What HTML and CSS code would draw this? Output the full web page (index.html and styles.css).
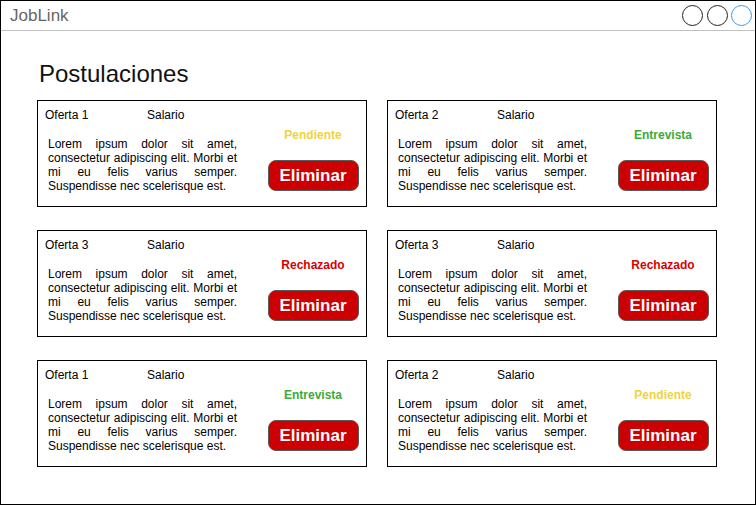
FILE: index.html
```html
<!DOCTYPE html>
<html lang="es">
<head>
<meta charset="utf-8">
<title>JobLink</title>
<link rel="stylesheet" href="styles.css">
</head>
<body>
<div class="window">
  <header class="titlebar">
    <span class="app-title">JobLink</span>
    <div class="controls">
      <span class="dot"></span>
      <span class="dot"></span>
      <span class="dot dot-blue"></span>
    </div>
  </header>
  <main class="content">
    <h1 class="heading">Postulaciones</h1>
    <div class="grid">
      <div class="card">
        <div class="info">
          <div class="meta"><span class="offer">Oferta 1</span><span>Salario</span></div>
          <p class="desc">Lorem ipsum dolor sit amet, consectetur adipiscing elit. Morbi et mi eu felis varius semper. Suspendisse nec scelerisque est.</p>
        </div>
        <div class="side">
          <span class="status pending">Pendiente</span>
          <button class="btn">Eliminar</button>
        </div>
      </div>
      <div class="card">
        <div class="info">
          <div class="meta"><span class="offer">Oferta 2</span><span>Salario</span></div>
          <p class="desc">Lorem ipsum dolor sit amet, consectetur adipiscing elit. Morbi et mi eu felis varius semper. Suspendisse nec scelerisque est.</p>
        </div>
        <div class="side">
          <span class="status interview">Entrevista</span>
          <button class="btn">Eliminar</button>
        </div>
      </div>
      <div class="card">
        <div class="info">
          <div class="meta"><span class="offer">Oferta 3</span><span>Salario</span></div>
          <p class="desc">Lorem ipsum dolor sit amet, consectetur adipiscing elit. Morbi et mi eu felis varius semper. Suspendisse nec scelerisque est.</p>
        </div>
        <div class="side">
          <span class="status rejected">Rechazado</span>
          <button class="btn">Eliminar</button>
        </div>
      </div>
      <div class="card">
        <div class="info">
          <div class="meta"><span class="offer">Oferta 3</span><span>Salario</span></div>
          <p class="desc">Lorem ipsum dolor sit amet, consectetur adipiscing elit. Morbi et mi eu felis varius semper. Suspendisse nec scelerisque est.</p>
        </div>
        <div class="side">
          <span class="status rejected">Rechazado</span>
          <button class="btn">Eliminar</button>
        </div>
      </div>
      <div class="card">
        <div class="info">
          <div class="meta"><span class="offer">Oferta 1</span><span>Salario</span></div>
          <p class="desc">Lorem ipsum dolor sit amet, consectetur adipiscing elit. Morbi et mi eu felis varius semper. Suspendisse nec scelerisque est.</p>
        </div>
        <div class="side">
          <span class="status interview">Entrevista</span>
          <button class="btn">Eliminar</button>
        </div>
      </div>
      <div class="card">
        <div class="info">
          <div class="meta"><span class="offer">Oferta 2</span><span>Salario</span></div>
          <p class="desc">Lorem ipsum dolor sit amet, consectetur adipiscing elit. Morbi et mi eu felis varius semper. Suspendisse nec scelerisque est.</p>
        </div>
        <div class="side">
          <span class="status pending">Pendiente</span>
          <button class="btn">Eliminar</button>
        </div>
      </div>
    </div>
  </main>
</div>
</body>
</html>
```

FILE: styles.css
```css
* { box-sizing: border-box; }

html, body {
  margin: 0;
  padding: 0;
  background: #ffffff;
}

body {
  font-family: "Liberation Sans", Arial, Helvetica, sans-serif;
  color: #000;
}

.window {
  width: 756px;
  height: 505px;
  border: 1px solid #000;
  background: #fff;
  overflow: hidden;
}

.titlebar {
  height: 30px;
  border-bottom: 1px solid #c0c0c0;
  display: flex;
  align-items: flex-start;
  justify-content: space-between;
  padding: 0 3px 0 9px;
}

.app-title {
  font-size: 17px;
  line-height: 20px;
  color: #666666;
  margin-top: 5px;
}

.controls {
  display: flex;
  gap: 3.5px;
  margin-top: 4px;
}

.dot {
  width: 21px;
  height: 21px;
  border: 1.5px solid #222;
  border-radius: 50%;
}

.dot-blue {
  border-color: #3a9bf4;
}

.content {
  padding: 29px 0 0 36px;
}

.heading {
  margin: 0 0 12px 2px;
  font-size: 24px;
  line-height: 28px;
  font-weight: normal;
  color: #111;
}

.grid {
  display: grid;
  grid-template-columns: 330px 330px;
  grid-auto-rows: 107px;
  column-gap: 20px;
  row-gap: 23px;
}

.card {
  border: 1px solid #000;
  display: flex;
}

.info {
  width: 222px;
  padding: 7px 0 0 7px;
}

.meta {
  display: flex;
  font-size: 12px;
  line-height: 14px;
}

.offer {
  width: 102px;
}

.desc {
  margin: 15px 0 0 3px;
  width: 189px;
  font-size: 12px;
  line-height: 14px;
  text-align: justify;
}

.side {
  flex: 1;
  display: flex;
  flex-direction: column;
  align-items: center;
  padding-top: 27px;
}

.status {
  font-size: 12px;
  line-height: 14px;
  font-weight: bold;
}

.pending { color: #f0d43a; }
.interview { color: #3baa3b; }
.rejected { color: #d90000; }

.btn {
  margin-top: 18px;
  width: 91px;
  height: 31px;
  border: 1px solid #5a5a5a;
  border-radius: 8px;
  background: #cc0000;
  color: #fff;
  font-family: "Liberation Sans", Arial, Helvetica, sans-serif;
  font-size: 17px;
  font-weight: bold;
  padding: 0;
  display: flex;
  align-items: center;
  justify-content: center;
}
```
